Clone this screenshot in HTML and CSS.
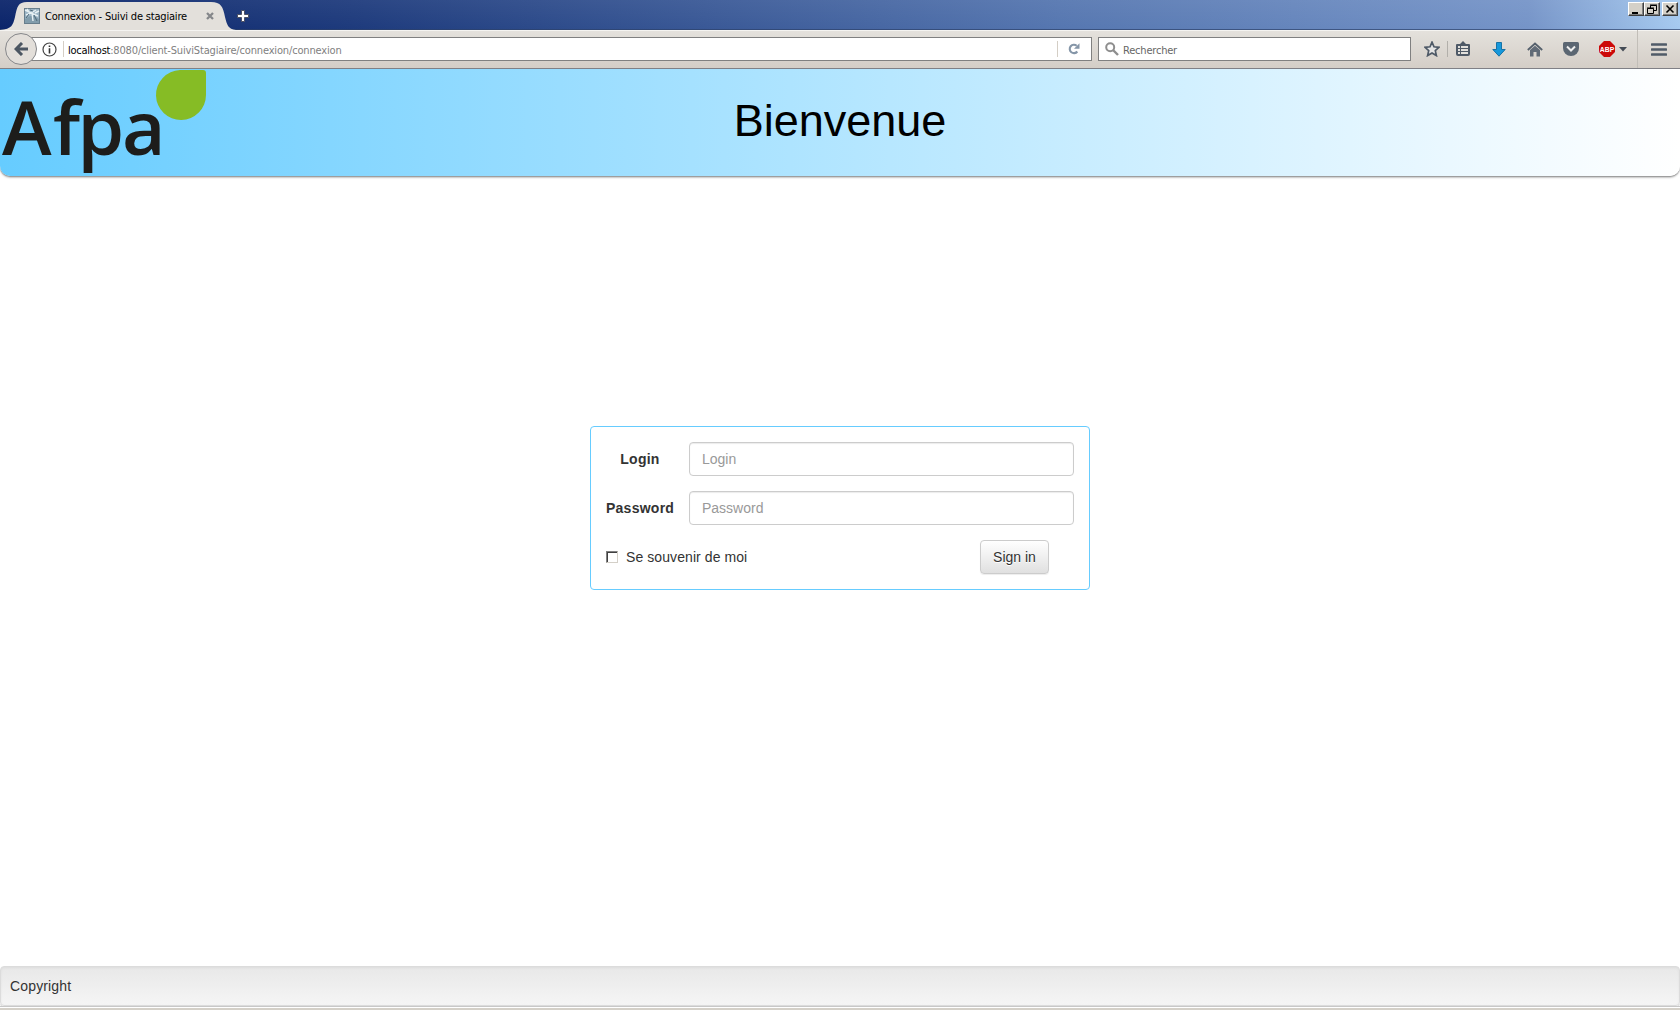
FILE: index.html
```html
<!DOCTYPE html>
<html lang="fr">
<head>
<meta charset="utf-8">
<title>Connexion - Suivi de stagiaire</title>
<link rel="stylesheet" href="styles.css">
</head>
<body>
<div class="titlebar">
  <div class="tab">
    <svg class="tab-shape" width="236" height="30" viewBox="0 0 236 30"><path d="M0 30C12 29 13 25 15 17C17 7 18 2 27 2H211C221 2 223 7 225 17C227 25 228 29 236 30Z" fill="#e3e0db"/></svg>
    <svg class="favicon" width="16" height="16" viewBox="0 0 16 16"><rect x=".5" y=".5" width="15" height="15" fill="#9bb4c4" stroke="#687e8c"/><path d="M1 11L6 8H10L15 11V15H1Z" fill="#829dac"/><path d="M1 2L7 5L12 2M2 7L7 5L14 8M8 5L9 13M3 1L5 4M11 5L15 3" stroke="#e7f0f3" stroke-width="1.4" fill="none"/><path d="M5 6L2 10M10 7L13 13M6 2L9 3" stroke="#4f6979" fill="none"/></svg>
    <span class="tab-title">Connexion - Suivi de stagiaire</span>
    <svg class="tab-close" width="8" height="8" viewBox="0 0 8 8"><path d="M1 1L7 7M7 1L1 7" stroke="#85878a" stroke-width="2.3"/></svg>
  </div>
  <svg class="new-tab" width="12" height="12" viewBox="0 0 12 12"><path d="M4.5 .5H7.5V4.5H11.5V7.5H7.5V11.5H4.5V7.5H.5V4.5H4.5Z" fill="#fff" stroke="#4d5163"/></svg>
  <div class="window-buttons">
    <span class="win"><svg width="14" height="12"><path d="M3 9H9V11H3Z"/></svg></span>
    <span class="win"><svg width="14" height="12"><path d="M5.5 5V2.5H11.5V7.5H9M5 2H12M2.5 5.5H8.5V10.5H2.5ZM2 5H9" fill="none" stroke="#000"/></svg></span>
    <span class="win close"><svg width="14" height="12"><path d="M3.5 2.5L10.5 9.5M10.5 2.5L3.5 9.5" stroke="#000" stroke-width="1.6"/></svg></span>
  </div>
</div>
<div class="toolbar">
  <div class="back"><svg width="14" height="14" viewBox="0 0 14 14"><path d="M8 1L2 7L8 13M2 7H14" fill="none" stroke="#4c5662" stroke-width="3"/></svg></div>
  <div class="url">
    <svg class="info" width="15" height="15" viewBox="0 0 15 15"><circle cx="7.5" cy="7.5" r="6.5" fill="none" stroke="#444" stroke-width="1.2"/><path d="M6.7 3.5H8.3V5H6.7ZM6.7 6.3H8.3V11.5H6.7Z" fill="#333"/></svg>
    <span class="sep"></span>
    <span class="host">localhost</span><span class="path">:8080/client-SuiviStagiaire/connexion/connexion</span>
    <span class="sep reload-sep"></span>
    <svg class="reload" width="12" height="12" viewBox="0 0 12 12"><path d="M9.3 8.5A4.2 4.2 0 1 1 8.7 2.8" fill="none" stroke="#8596a8" stroke-width="2.1"/><path d="M11.5 .3V5.8H6Z" fill="#8596a8"/></svg>
  </div>
  <div class="search">
    <svg width="14" height="14" viewBox="0 0 14 14"><circle cx="5.2" cy="5.2" r="4" fill="none" stroke="#8e8e8e" stroke-width="2"/><path d="M8 8L13 13" stroke="#8e8e8e" stroke-width="2.4"/></svg>
    <span>Rechercher</span>
  </div>
  <div class="tools">
    <svg class="star" width="16" height="16" viewBox="0 0 16 16"><path d="M8 1.2L10 5.8L15 6.3L11.3 9.6L12.4 14.6L8 12L3.6 14.6L4.7 9.6L1 6.3L6 5.8Z" fill="#e4e4e4" stroke="#4f5a67" stroke-width="1.7"/></svg>
    <span class="tool-sep"></span>
    <svg class="list" width="14" height="16" viewBox="0 0 14 16"><path d="M1 3H4L7 0L10 3H13Q14 3 14 4V13Q14 15 12 15H2Q0 15 0 13V4Q0 3 1 3Z" fill="#4f5a67"/><path d="M2 5H4V7H2ZM5 5H12V7H5ZM2 8H4V10H2ZM5 8H12V10H5ZM2 11H4V13H2ZM5 11H12V13H5Z" fill="#e2e0dc"/></svg>
    <svg class="download" width="14" height="15" viewBox="0 0 14 15"><path d="M4.5 .5H9.5V7.5H13.2L7 14.2L.8 7.5H4.5Z" fill="#1698db" stroke="#1772a5"/></svg>
    <svg class="home" width="16" height="15" viewBox="0 0 16 15"><path d="M.8 8L8 1.5L15.2 8" fill="none" stroke="#55606c" stroke-width="1.8"/><path d="M3 8L8 3.8L13 8V14.5H9.5V10H6.5V14.5H3Z" fill="#616b77"/></svg>
    <svg class="pocket" width="16" height="14" viewBox="0 0 16 14"><path d="M1.5 0H14.5Q16 0 16 1.5V6A8 8 0 0 1 0 6V1.5Q0 0 1.5 0Z" fill="#5b6672"/><path d="M4 4.5L8 8.5L12 4.5" stroke="#eee" stroke-width="2" fill="none"/></svg>
    <svg class="abp" width="16" height="16" viewBox="0 0 16 16"><path d="M5 0H11L16 5V11L11 16H5L0 11V5Z" fill="#cc0909"/><text x="8" y="10.7" text-anchor="middle">ABP</text></svg>
    <svg class="caret" width="8" height="5" viewBox="0 0 8 5"><path d="M0 0H8L4 4.5Z" fill="#444b55"/></svg>
    <span class="menu-sep"></span>
    <svg class="menu" width="16" height="13" viewBox="0 0 16 13"><path d="M1 1.5H15M1 6.5H15M1 11.5H15" stroke="#505b68" stroke-width="2.6" stroke-linecap="round"/></svg>
  </div>
</div>
<header class="banner">
  <svg class="logo" width="208" height="107" viewBox="0 0 208 107"><text x="2 53 77.5 122" y="86">Afpa</text><path d="M180 1H203Q206 1 206 4V26A25 25 0 1 1 180 1Z" fill="#86bc25"/></svg>
  <h1>Bienvenue</h1>
</header>
<main>
  <form class="login">
    <div class="row"><label class="label" for="login"><span class="login-label">Login</span></label><input id="login" class="field" type="text" placeholder="Login"></div>
    <div class="row"><label class="label" for="password"><span class="password-label">Password</span></label><input id="password" class="field" type="password" placeholder="Password"></div>
    <div class="row actions"><label class="remember"><input type="checkbox" class="check"><span>Se souvenir de moi</span></label><button class="submit" type="button">Sign in</button></div>
  </form>
</main>
<footer class="footer">Copyright</footer>
<div class="window-edge"></div>
</body>
</html>
```
FILE: styles.css
```css
* { box-sizing: border-box; }
body {
  margin: 0;
  height: 1010px;
  display: flex;
  flex-direction: column;
  overflow: hidden;
  background: #fff;
  color: #333;
  font: 14px/20px "Liberation Sans", sans-serif;
}
svg { display: block; flex: none; }
.titlebar {
  height: 30px;
  flex: none;
  display: flex;
  background: linear-gradient(rgba(255,255,255,.06), transparent), linear-gradient(90deg, #0a246a, #1d3a7c 21%, #5576b0 63%, #7594c8 91%, #a6caf0);
  box-shadow: inset 0 -1px rgba(45,65,105,.7);
  font: 11px/14px "DejaVu Sans Condensed", "DejaVu Sans", sans-serif;
  color: #000;
}
.tab { width: 236px; display: grid; grid-template-columns: 24px 21px 160px 1fr; align-items: center; }
.tab-shape { grid-area: 1 / 1 / 2 / 5; }
.favicon { grid-area: 1 / 2; margin-top: 2px; }
.tab-title { grid-area: 1 / 3; padding-top: 3px; letter-spacing: -.19px; white-space: nowrap; }
.tab-close { grid-area: 1 / 4; margin: 2px 0 0 1px; }
.new-tab { margin: 10px 0 0 1px; }
.window-buttons { display: flex; margin: 2px 2px 0 auto; height: 14px; }
.win { width: 16px; height: 14px; background: #d4d0c8; border: 1px solid; border-color: #fff #404040 #404040 #fff; box-shadow: inset -1px -1px #808080; }
.close { margin-left: 2px; }
.toolbar {
  height: 39px;
  flex: none;
  display: flex;
  align-items: flex-start;
  background: linear-gradient(#f5f4f1 0 1px, #e4e1dc 1px, #d4cec7);
  border-bottom: 1px solid #808086;
  font: 11px/14px "DejaVu Sans Condensed", "DejaVu Sans", sans-serif;
}
.back { width: 32px; height: 32px; margin: 3px 0 0 5px; border: 1px solid #86878a; border-radius: 50%; background: #e3dfda; display: grid; place-items: center; z-index: 1; }
.url { width: 1061px; height: 24px; margin: 7px 0 0 -6px; border: 1px solid #808080; background: #fff; display: flex; align-items: center; padding-left: 10px; }
.sep { width: 1px; height: 16px; margin: 0 4px 0 6px; background: #d4cec5; }
.host { color: #000; letter-spacing: -.25px; padding-top: 3px; }
.path { color: #808080; letter-spacing: -.16px; padding-top: 3px; }
.reload-sep { margin: 0 10px 0 auto; }
.reload { margin-right: 11px; }
.search { width: 313px; height: 24px; margin: 7px 0 0 6px; border: 1px solid #808080; background: #fff; display: flex; align-items: center; gap: 4px; padding-left: 6px; color: #666; letter-spacing: -.2px; }
.search span { padding-top: 3px; }
.tools { flex: 1; display: flex; align-items: center; height: 38px; }
.star { margin-left: 13px; }
.tool-sep { width: 1px; height: 16px; margin: 0 8px 0 7px; background: #b2afaa; }
.download { margin-left: 22px; }
.home { margin-left: 21px; }
.pocket { margin-left: 20px; }
.abp { margin-left: 20px; }
.abp text { font: bold 6.8px "Liberation Sans", sans-serif; fill: #fff; }
.caret { margin-left: 4px; }
.menu-sep { width: 1px; height: 38px; margin: 0 13px 0 10px; background: #c2beb8; }
.banner {
  height: 107px;
  flex: none;
  display: grid;
  background: linear-gradient(90deg, #66ccff, #fff);
  border-radius: 0 0 10px 10px;
  box-shadow: 0 1px 1px #999, 0 2px 2px #ccc;
}
.logo { grid-area: 1 / 1; }
.logo text { font: 600 75px "Open Sans", sans-serif; fill: #1d1d1b; }
h1 { grid-area: 1 / 1; margin: 27px 0 0; text-align: center; font: 45px/50px "Liberation Sans", sans-serif; color: #000; }
main { flex: 1; display: flex; justify-content: center; align-items: flex-start; padding-top: 250px; }
.login { width: 500px; height: 164px; border: 1px solid #66ccff; border-radius: 4px; padding: 15px; display: flex; flex-direction: column; gap: 15px; }
.row { height: 34px; display: flex; align-items: center; }
.label { width: 83px; padding-right: 15px; text-align: center; font-weight: bold; }
.login-label { letter-spacing: .25px; }
.password-label { letter-spacing: .25px; }
.field { width: 385px; height: 34px; padding: 6px 12px; border: 1px solid #ccc; border-radius: 4px; box-shadow: inset 0 1px 1px rgba(0,0,0,.08); font: 14px/20px "Liberation Sans", sans-serif; }
.field::placeholder { color: #999; opacity: 1; }
.actions { justify-content: space-between; padding-right: 25px; }
.remember { display: flex; align-items: center; gap: 7px; letter-spacing: .08px; }
.check { appearance: none; width: 12px; height: 12px; margin: 0 1px 0 0; border: 1px solid; border-color: #808080 #d4d0c8 #d4d0c8 #808080; box-shadow: inset 1px 1px #404040; }
.submit { width: 69px; height: 34px; padding: 0; border: 1px solid #ccc; border-radius: 4px; background: linear-gradient(#fff, #e0e0e0); box-shadow: inset 0 1px rgba(255,255,255,.15), 0 1px 1px rgba(0,0,0,.075); font: 14px/20px "Liberation Sans", sans-serif; color: #333; text-shadow: 0 1px #fff; }
.footer { height: 40px; flex: none; padding: 9px; border: 1px solid #dcdcdc; border-radius: 4px; background: linear-gradient(#e8e8e8, #f5f5f5); box-shadow: inset 0 1px 3px rgba(0,0,0,.05), 0 1px #d4d4d4; letter-spacing: .15px; }
.window-edge { height: 4px; flex: none; background: linear-gradient(#c8c8c8 0 1px, #fff 1px 2px, #d4d0c8 2px); }
```
